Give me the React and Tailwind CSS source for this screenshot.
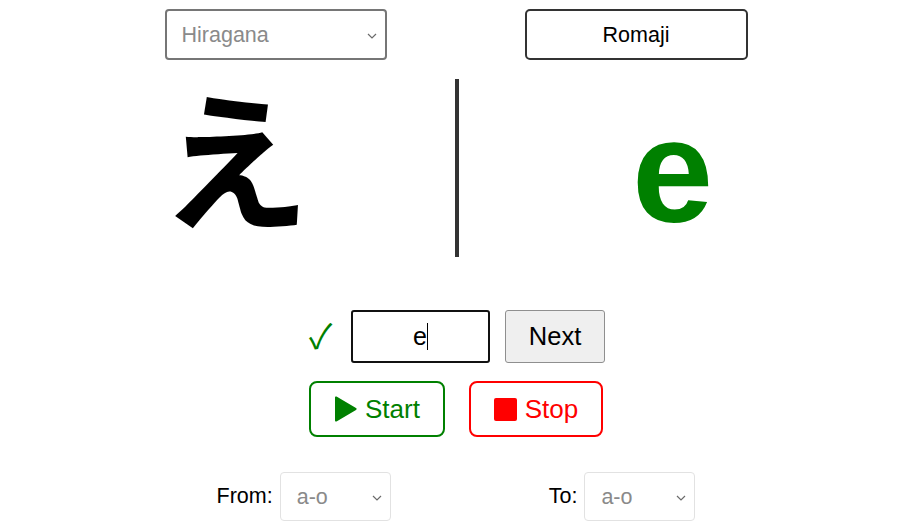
import React from "react";

function FakeSelect({ value, className = "", textClass = "" }) {
  return (
    <div className={`flex items-center justify-between bg-white ${className}`}>
      <span className={textClass}>{value}</span>
      <svg width="10" height="6" viewBox="0 0 10 6" className="mr-[8px]">
        <path d="M1 1l4 4 4-4" fill="none" stroke="#6b6b6b" strokeWidth="1.2" />
      </svg>
    </div>
  );
}

export default function App() {
  return (
    <div
      className="w-[912px] h-[528px] bg-white text-black overflow-hidden"
      style={{ fontFamily: '"Liberation Sans", Arial, sans-serif' }}
    >
      {/* top controls */}
      <div className="flex justify-center gap-[138px] pt-[9px]">
        <FakeSelect
          value="Hiragana"
          className="w-[222px] h-[51px] border-2 border-[#767676] rounded-[4px] pl-[15px] pt-[2px]"
          textClass="text-[21.5px] text-[#8a8a8a]"
        />
        <button className="w-[223px] h-[51px] border-2 border-[#333] rounded-[5px] text-[21.5px] bg-white pt-[2px]">
          Romaji
        </button>
      </div>

      {/* kana / romaji display */}
      <div className="flex items-start mt-[19px] h-[178px]">
        <div className="w-[455px] h-full">
          <span
            className="block pl-[160px] text-[150px] leading-[178px] font-bold -mt-[14px]"
            style={{ fontFamily: '"Noto Sans CJK JP", sans-serif' }}
          >
            え
          </span>
        </div>
        <div className="w-[4px] h-[178px] bg-[#333]" />
        <div className="flex-1 h-full">
          <span className="block pl-[173px] text-[146px] leading-[178px] font-bold text-[#008000] pt-[4px]">
            e
          </span>
        </div>
      </div>

      {/* answer row */}
      <div className="flex items-center mt-[53px] pl-[309px]">
        <span
          className="w-[42px] text-[34px] leading-none text-[#008000] -mt-[4px]"
          style={{ fontFamily: '"Noto Sans CJK JP", sans-serif' }}
        >
          ✓
        </span>
        <div className="w-[139px] h-[53px] border-2 border-[#111] rounded-[3px] flex items-center justify-center text-[25px]">
          <span>e</span>
          <span className="w-px h-[27px] bg-black" />
        </div>
        <button className="ml-[15px] w-[100px] h-[53px] bg-[#efefef] border border-[#8f8f8f] rounded-[3px] text-[25.5px]">
          Next
        </button>
      </div>

      {/* start / stop */}
      <div className="flex justify-center gap-[24px] mt-[18px]">
        <button className="w-[136px] h-[56px] border-2 border-[#008000] rounded-[8px] bg-white flex items-center justify-center gap-[8px] text-[26px] text-[#008000]">
          <svg width="23" height="26" viewBox="0 0 23 26">
            <path d="M1 1.5v23a1 1 0 0 0 1.5.9l19.5-11.5a1 1 0 0 0 0-1.8L2.5.6A1 1 0 0 0 1 1.5z" fill="#008000" />
          </svg>
          Start
        </button>
        <button className="w-[134px] h-[56px] border-2 border-[#ff0000] rounded-[8px] bg-white flex items-center justify-center gap-[8px] text-[26px] text-[#ff0000]">
          <span className="w-[23px] h-[23px] bg-[#ff0000] rounded-[2px]" />
          Stop
        </button>
      </div>

      {/* range */}
      <div className="flex justify-center gap-[158px] mt-[35px]">
        <div className="flex items-center gap-[7px]">
          <span className="text-[21.5px]">From:</span>
          <FakeSelect
            value="a-o"
            className="w-[111px] h-[49px] border border-[#e2e2e2] rounded-[4px] pl-[16px] pt-[2px]"
            textClass="text-[21.5px] text-[#8a8a8a]"
          />
        </div>
        <div className="flex items-center gap-[7px]">
          <span className="text-[21.5px]">To:</span>
          <FakeSelect
            value="a-o"
            className="w-[111px] h-[49px] border border-[#e2e2e2] rounded-[4px] pl-[16px] pt-[2px]"
            textClass="text-[21.5px] text-[#8a8a8a]"
          />
        </div>
      </div>
    </div>
  );
}
